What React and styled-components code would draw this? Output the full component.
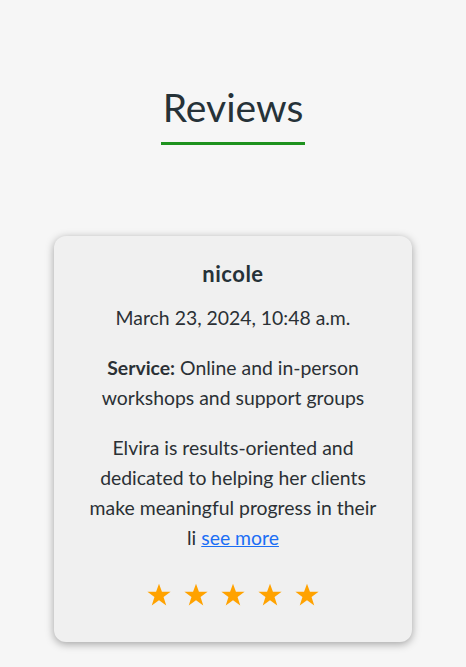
import styled, { createGlobalStyle } from 'styled-components';

const GlobalStyle = createGlobalStyle`
    body {
        margin: 0;
        background: #f6f6f6;
        font-family: Lato, "Open Sans", sans-serif;
        color: #2b3035;
    }
`

const Section = styled.section`
    display: flex;
    flex-direction: column;
    align-items: center;
    padding: 83px 0 40px;
`

const Title = styled.h2`
    margin: 0;
    font-family: Lato, sans-serif;
    font-weight: 400;
    font-size: 39px;
    line-height: 48px;
    color: #263238;
    padding: 0 2px 11px;
    border-bottom: 3px solid #1e921e;
`

const Card = styled.div`
    margin-top: 91px;
    width: 358px;
    box-sizing: border-box;
    padding: 22px 30px 34px;
    background: #f0f0f0;
    border-radius: 12px;
    box-shadow: 0 2px 8px rgba(0, 0, 0, 0.35);
    text-align: center;
`

const Name = styled.h3`
    margin: 0;
    font-size: 22px;
    font-weight: 700;
    line-height: 32px;
    letter-spacing: 0.5px;
    color: #263238;
`

const Para = styled.p`
    margin: ${props => props.top || 14}px 0 0;
    font-size: 19.4px;
    line-height: 30px;
`

const Link = styled.a`
    color: #1b6ef5;
    text-decoration: underline;
    cursor: pointer;
`

const Stars = styled.div`
    margin-top: 29px;
    display: flex;
    justify-content: center;
    gap: 11px;
    line-height: 30px;
`

const Star = () => (
    <svg width="26" height="26" viewBox="0 0 24 24">
        <path fill="#ffa200" d="M12 1.5l2.7 7.6h8l-6.5 4.8 2.5 7.7L12 16.9l-6.7 4.7 2.5-7.7L1.3 9.1h8z" />
    </svg>
)

const App = () => {
    return (
        <>
            <GlobalStyle />
            <Section>
                <Title>Reviews</Title>
                <Card>
                    <Name>nicole</Name>
                    <Para top={13}>March 23, 2024, 10:48 a.m.</Para>
                    <Para top={20}><b>Service:</b> Online and in-person workshops and support groups</Para>
                    <Para top={20}>
                        Elvira is results-oriented and dedicated to helping her clients make meaningful progress in their li <Link>see more</Link>
                    </Para>
                    <Stars>
                        {[0, 1, 2, 3, 4].map(i => <Star key={i} />)}
                    </Stars>
                </Card>
            </Section>
        </>
    )
}

export default App;
